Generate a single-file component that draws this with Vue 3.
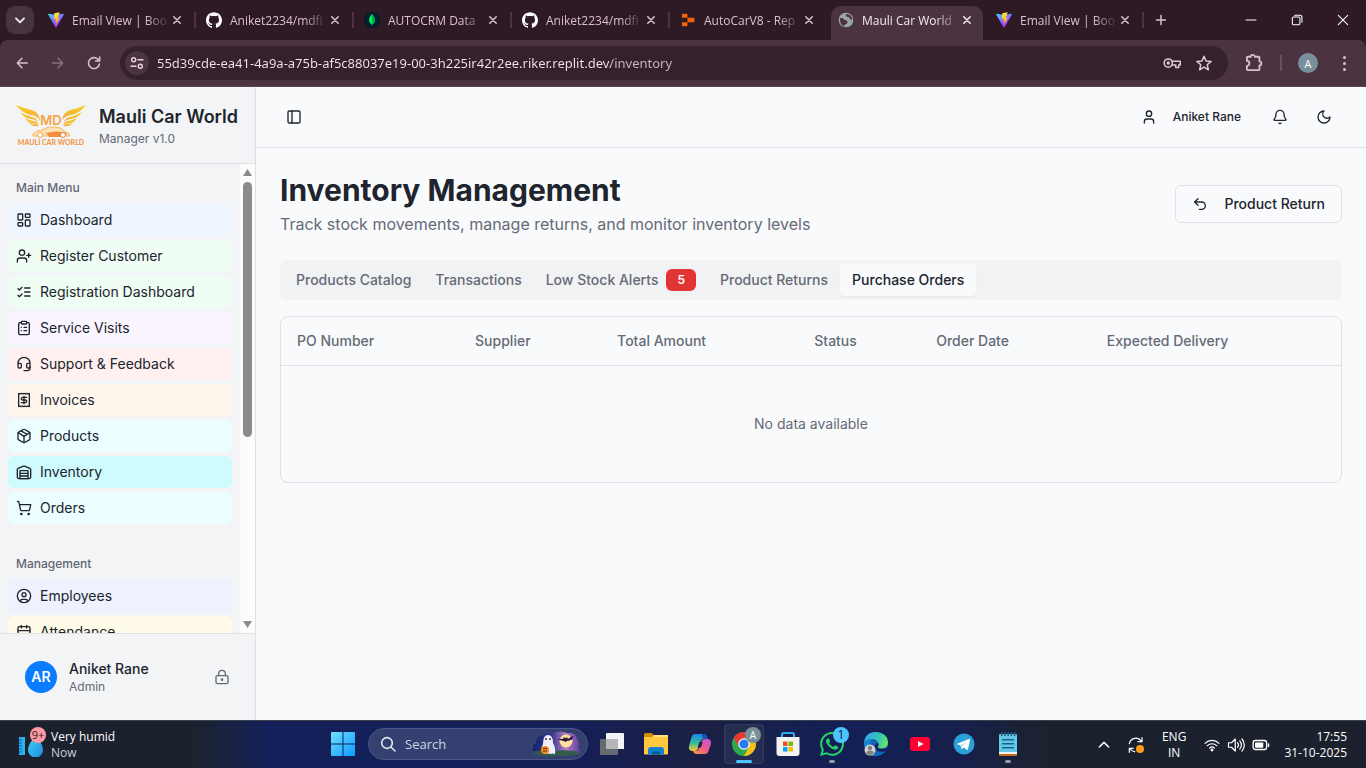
<script setup>
import { h, ref } from 'vue'

const line = {
  dashboard: '<rect width="7" height="9" x="3" y="3" rx="1"/><rect width="7" height="5" x="14" y="3" rx="1"/><rect width="7" height="9" x="14" y="12" rx="1"/><rect width="7" height="5" x="3" y="16" rx="1"/>',
  userPlus: '<path d="M16 21v-2a4 4 0 0 0-4-4H6a4 4 0 0 0-4 4v2M19 8v6M22 11h-6"/><circle cx="9" cy="7" r="4"/>',
  listChecks: '<path d="m3 17 2 2 4-4M3 7l2 2 4-4M13 6h8M13 12h8M13 18h8"/>',
  clipboard: '<rect width="8" height="4" x="8" y="2" rx="1"/><path d="M16 4h2a2 2 0 0 1 2 2v14a2 2 0 0 1-2 2H6a2 2 0 0 1-2-2V6a2 2 0 0 1 2-2h2M12 11h4M12 16h4M8 11h.01M8 16h.01"/>',
  headset: '<path d="M3 11h3a2 2 0 0 1 2 2v3a2 2 0 0 1-2 2H5a2 2 0 0 1-2-2v-5Zm0 0a9 9 0 1 1 18 0m0 0v5a2 2 0 0 1-2 2h-1a2 2 0 0 1-2-2v-3a2 2 0 0 1 2-2h3Z"/><path d="M21 16v2a4 4 0 0 1-4 4h-5"/>',
  receipt: '<path d="M4 2v20l2-1 2 1 2-1 2 1 2-1 2 1 2-1 2 1V2l-2 1-2-1-2 1-2-1-2 1-2-1-2 1Z"/><path d="M16 8h-6a2 2 0 1 0 0 4h4a2 2 0 1 1 0 4H8M12 17.5v-11"/>',
  package: '<path d="M11 21.73a2 2 0 0 0 2 0l7-4A2 2 0 0 0 21 16V8a2 2 0 0 0-1-1.73l-7-4a2 2 0 0 0-2 0l-7 4A2 2 0 0 0 3 8v8a2 2 0 0 0 1 1.73zM12 22V12"/><path d="m3.3 7 7.703 4.734a2 2 0 0 0 1.994 0L20.7 7M7.5 4.27l9 5.15"/>',
  warehouse: '<path d="M22 8.35V20a2 2 0 0 1-2 2H4a2 2 0 0 1-2-2V8.35A2 2 0 0 1 3.26 6.5l8-3.2a2 2 0 0 1 1.48 0l8 3.2A2 2 0 0 1 22 8.35ZM6 18h12M6 14h12"/><rect width="12" height="12" x="6" y="10"/>',
  cart: '<circle cx="8" cy="21" r="1"/><circle cx="19" cy="21" r="1"/><path d="M2.05 2.05h2l2.66 12.42a2 2 0 0 0 2 1.58h9.78a2 2 0 0 0 1.95-1.57l1.65-7.43H5.12"/>',
  userCircle: '<circle cx="12" cy="12" r="10"/><circle cx="12" cy="10" r="3"/><path d="M7 20.662V19a2 2 0 0 1 2-2h6a2 2 0 0 1 2 2v1.662"/>',
  calendar: '<path d="M8 2v4M16 2v4M3 10h18"/><rect width="18" height="18" x="3" y="4" rx="2"/>',
  lock: '<circle cx="12" cy="16" r="1"/><rect width="18" height="12" x="3" y="10" rx="2"/><path d="M7 10V7a5 5 0 0 1 10 0v3"/>',
  panel: '<rect width="18" height="18" x="3" y="3" rx="2"/><path d="M9 3v18"/>',
  user: '<path d="M19 21v-2a4 4 0 0 0-4-4H9a4 4 0 0 0-4 4v2"/><circle cx="12" cy="7" r="4"/>',
  bell: '<path d="M10.268 21a2 2 0 0 0 3.464 0M3.262 15.326A1 1 0 0 0 4 17h16a1 1 0 0 0 .74-1.673C19.41 13.956 18 12.499 18 8A6 6 0 0 0 6 8c0 4.499-1.411 5.956-2.738 7.326"/>',
  moon: '<path d="M12 3a6 6 0 0 0 9 9 9 9 0 1 1-9-9Z"/>',
  undo: '<path d="M9 14 4 9l5-5"/><path d="M4 9h10.5a5.5 5.5 0 0 1 0 11H11"/>',
  close: '<path d="M6.500 6.500 17.500 17.500M17.500 6.500 6.500 17.500"/>',
  plus: '<path d="M12 3v18M3 12h18"/>',
  chevronDown: '<path d="m6 9.500 6 6 6-6"/>',
  chevronUp: '<path d="m4 15.500 8-8 8 8"/>',
  back: '<path d="M21 12H4M12 4l-8 8 8 8"/>',
  forward: '<path d="M3 12h17M12 4l8 8-8 8"/>',
  reload: '<path d="M20 13.500A8.200 8.200 0 1 1 17.600 6.200L20 8.500M20.500 3v6h-6"/>',
  tune: '<circle cx="7" cy="7" r="3"/><path d="M13.500 7H21M3 17h7.500"/><circle cx="17" cy="17" r="3"/>',
  star: '<path d="m12 3 2.700 6.300 6.800.6-5.200 4.500 1.600 6.700L12 17.500l-5.900 3.600 1.600-6.700L2.500 9.900l6.800-.6z"/>',
  key: '<circle cx="7" cy="12" r="5.500"/><path d="M12 9.500h11v5h-2v3.500h-4v-3.500h-5"/><circle cx="7" cy="12" r="1.200"/>',
  puzzle: '<path d="M4.500 4.500H8a2.500 2.300 0 0 1 5 0h4.500a1 1 0 0 1 1 1V10a2.300 2.500 0 0 1 0 5v4.500a1 1 0 0 1-1 1h-13a1 1 0 0 1-1-1V15.500a3 3 0 0 0 0-6v-4a1 1 0 0 1 1-1z"/>',
  minimize: '<path d="M2 12h20"/>',
  restore: '<rect x="4" y="7" width="13" height="13" rx="2"/><path d="M8 4h9a3.500 3.500 0 0 1 3.500 3.500V16"/>',
  quit: '<path d="m4 4 16 16M20 4 4 20"/>',
  search: '<circle cx="10.500" cy="10.500" r="8"/><path d="m16.500 16.500 6 6"/>',
  volume: '<path d="M2 9v6h4l5 5V4L6 9zM14 9a4 4 0 0 1 0 6M17 6.500a8 8 0 0 1 0 11M20 4a12 12 0 0 1 0 16"/>',
  wifi: '<path d="M1.500 9.500a15 15 0 0 1 21 0M5 13a10 10 0 0 1 14 0M8.500 16.500a5 5 0 0 1 7 0"/><circle cx="12" cy="19.500" r="1.300" fill="currentColor"/>',
  sync: '<path d="M2 10a10 10 0 0 1 18-4M21 1v6h-6M2 23v-6h6M3 18a10 10 0 0 0 7 4"/>'
}

const art = {
  vite: '<defs><linearGradient id="va" x1="0" y1="0" x2=".6" y2="1"><stop offset="0" stop-color="#41d1ff"/><stop offset=".9" stop-color="#b42cfe"/></linearGradient><linearGradient id="vb" x1=".4" y1="0" x2=".6" y2="1"><stop offset="0" stop-color="#ffe94a"/><stop offset="1" stop-color="#ffa000"/></linearGradient></defs><path fill="url(#va)" d="M23.600 4 12.700 23q-.7 1-1.400 0L.4 4Q0 2.600 1.400 2.800L12 4.500l10.600-1.700q1.400-.2 1 1.200z"/><path fill="url(#vb)" d="m17.500.4-8 1.600-.7 8.700 3.200-.7-1 4.600 2.100-.6-1.200 5.700 5.700-11-3 .6z"/>',
  github: '<path fill="#fff" d="M12 .297c-6.630 0-12 5.373-12 12 0 5.303 3.438 9.800 8.205 11.385.6.113.82-.258.82-.577 0-.285-.01-1.040-.015-2.040-3.338.724-4.042-1.610-4.042-1.610C4.422 18.070 3.633 17.700 3.633 17.700c-1.087-.744.084-.729.084-.729 1.205.084 1.838 1.236 1.838 1.236 1.070 1.835 2.809 1.305 3.495.998.108-.776.417-1.305.76-1.605-2.665-.3-5.466-1.332-5.466-5.930 0-1.310.465-2.380 1.235-3.220-.135-.303-.54-1.523.105-3.176 0 0 1.005-.322 3.300 1.230.96-.267 1.980-.399 3-.405 1.020.006 2.040.138 3 .405 2.280-1.552 3.285-1.230 3.285-1.230.645 1.653.24 2.873.12 3.176.765.84 1.230 1.910 1.230 3.220 0 4.610-2.805 5.625-5.475 5.920.42.36.81 1.096.81 2.220 0 1.606-.015 2.896-.015 3.286 0 .315.21.69.825.57C20.565 22.092 24 17.592 24 12.297c0-6.627-5.373-12-12-12"/>',
  mongo: '<circle cx="12" cy="12" r="12" fill="#001e2b"/><path fill="#00ed64" d="M12 3c1 2 4.500 4.500 4.500 9 0 4-2.500 5.500-4 6.800V21h-.8v-2.200C10.200 17.500 7.500 16 7.500 12c0-4.500 3.500-7 4.500-9z"/><path fill="#00a64a" d="M12 3c1 2 4.500 4.500 4.500 9 0 4-2.500 5.500-4.300 6.800z"/>',
  replit: '<path fill="#f26207" d="M4 2.500h6A1.200 1.200 0 0 1 11.200 3.700V8.800H4A1.200 1.200 0 0 1 2.800 7.600V3.700A1.200 1.200 0 0 1 4 2.500zM11.200 8.800h9.300A1.200 1.200 0 0 1 21.700 10v4a1.200 1.200 0 0 1-1.200 1.200h-9.300zM4 15.200h7.200v5.100A1.200 1.200 0 0 1 10 21.500H4A1.200 1.200 0 0 1 2.800 20.300v-3.900A1.200 1.200 0 0 1 4 15.200z"/>',
  globe: '<circle cx="12" cy="12" r="11" fill="#9aa4aa"/><path fill="#4b343f" d="M3 9q4-.3 6 1.500 1 2 3 2 3 .5 2 3.500-.5 2.500-3 2.500-1.800 0-1.500 3Q3 19.500 3 12zM12 3q-1 3.500 2 4.500 3-.5 3.500 2 .5 2.500 4 2Q21 5.500 15 3.500z"/>',
  windows: '<defs><linearGradient id="wa" x1="0" y1="0" x2="1" y2="1"><stop offset="0" stop-color="#6fe0ff"/><stop offset="1" stop-color="#0c9bff"/></linearGradient></defs><path fill="url(#wa)" d="M1 0h10.500v11.500H0V1q0-1 1-1zM12.500 0H23q1 0 1 1v10.500H12.500zM0 12.500h11.500V24H1q-1 0-1-1zM12.500 12.500H24V23q0 1-1 1H12.500z"/>',
  taskview: '<path fill="#f2f3f5" d="M7 1h16a1 1 0 0 1 1 1v15H6V2a1 1 0 0 1 1-1z" /><rect x="0" y="7" width="18" height="16" rx="1" fill="#666a70"/><path fill="#b4b6ba" d="M6 7h12v10H6z"/>',
  folder: '<path fill="#d08b00" d="M0 2.500Q0 1 1.500 1H8l2 2.500h5V9H0z"/><path fill="#ffc83d" d="M0 5h8l2-2h14v18.500q0 1-1 1H1q-1 0-1-1z"/><path fill="#ffe083" d="M10 3h14v2H8.500z"/><path fill="#1381d1" d="M4 22.500V18q0-3 3-3h10q3 0 3 3v4.500z"/><path fill="#075a9c" d="M8 22.500V21q0-1.500 1.500-1.500h5q1.500 0 1.500 1.500v1.500z"/>',
  copilot: '<defs><linearGradient id="ca" x1="0" y1="0" x2="0" y2="1"><stop offset="0" stop-color="#1a86ec"/><stop offset=".5" stop-color="#31b8a0"/><stop offset="1" stop-color="#f8c931"/></linearGradient><linearGradient id="cb" x1="1" y1="0" x2="0" y2="1"><stop offset="0" stop-color="#b650e8"/><stop offset=".5" stop-color="#f15a86"/><stop offset="1" stop-color="#fb9a45"/></linearGradient></defs><path fill="url(#ca)" d="M7 2h9q2 0 3 3l.5 2h-4q-2.500 0-3.200 2.500L10 16.500Q9.300 19 6.500 19H3.500Q0 18 1.200 13.500L3.500 5Q4.500 2 7 2z"/><path fill="url(#cb)" d="M17 22H8.500q-2.500 0-3.500-3h2.500q2.700 0 3.500-2.500l2.500-7Q14.300 7 17 7h3.500q3.500 1 2.300 5.500L20.500 19q-1 3-3.500 3z"/><path fill="#1750c4" d="M14 2h2q2 0 3 3l.5 2h-3q-2 0-2.500-2z"/><path fill="#14205a" d="M11.500 10h3.200l-1.800 5.500h-3.200z"/>',
  chrome: '<circle cx="12" cy="12" r="12" fill="#2da94f"/><path fill="#fbc116" d="M12 6.500h10.600A12 12 0 0 1 12 24l5-9z"/><path fill="#e33b2e" d="M1.600 6A12 12 0 0 1 22.600 6.500H12L7 15z"/><circle cx="12" cy="12" r="5.800" fill="#fff"/><circle cx="12" cy="12" r="4.600" fill="#267af4"/>',
  store: '<path d="M6 6V2.500Q6 1 7.500 1h9Q18 1 18 2.500V6" fill="none" stroke="#28aeea" stroke-width="2"/><path fill="#f3f3f3" d="M1 5h22q.5 0 .5.500V21q0 3-3 3h-17q-3 0-3-3V5.500Q.5 5 1 5z"/><path fill="#f04e24" d="M7 9.500h4.500V14H7z"/><path fill="#7fba00" d="M12.500 9.500H17V14h-4.500z"/><path fill="#00a4ef" d="M7 15h4.500v4.500H7z"/><path fill="#ffb900" d="M12.500 15H17v4.500h-4.500z"/>',
  whatsapp: '<path fill="#25d366" d="M17.472 14.382c-.297-.149-1.758-.867-2.030-.967-.273-.099-.471-.148-.67.15-.197.297-.767.966-.94 1.164-.173.199-.347.223-.644.075-.297-.15-1.255-.463-2.390-1.475-.883-.788-1.480-1.761-1.653-2.059-.173-.297-.018-.458.13-.606.134-.133.298-.347.446-.52.149-.174.198-.298.298-.497.099-.198.05-.371-.025-.52-.075-.149-.669-1.612-.916-2.207-.242-.579-.487-.5-.669-.51-.173-.008-.371-.01-.57-.01-.198 0-.52.074-.792.372-.272.297-1.040 1.016-1.040 2.479 0 1.462 1.065 2.875 1.213 3.074.149.198 2.096 3.200 5.077 4.487.709.306 1.262.489 1.694.625.712.227 1.360.195 1.871.118.571-.085 1.758-.719 2.006-1.413.248-.694.248-1.289.173-1.413-.074-.124-.272-.198-.57-.347m-5.421 7.403h-.004a9.870 9.870 0 0 1-5.031-1.378l-.361-.214-3.741.982.998-3.648-.235-.374a9.860 9.860 0 0 1-1.510-5.260c.001-5.450 4.436-9.884 9.888-9.884 2.640 0 5.122 1.030 6.988 2.898a9.825 9.825 0 0 1 2.893 6.994c-.003 5.450-4.437 9.884-9.885 9.884m8.413-18.297A11.815 11.815 0 0 0 12.050 0C5.495 0 .16 5.335.157 11.892c0 2.096.547 4.142 1.588 5.945L.057 24l6.305-1.654a11.882 11.882 0 0 0 5.683 1.448h.005c6.554 0 11.890-5.335 11.893-11.893a11.821 11.821 0 0 0-3.480-8.413Z"/>',
  edge: '<defs><linearGradient id="ea" x1="0" y1=".3" x2="1" y2=".6"><stop offset="0" stop-color="#2ba7ea"/><stop offset=".6" stop-color="#37c6b4"/><stop offset="1" stop-color="#6be85a"/></linearGradient></defs><circle cx="12" cy="12" r="12" fill="#0f66b8"/><path fill="url(#ea)" d="M0 11Q1 0 12 0q11.500 1 12 10 0 6-6.500 6.500-4 0-4-2 1-1 .8-3Q13.500 7 8 7 2 7 0 11z"/><path fill="#1b86d9" d="M0 11Q3 7 8 7.500 5 10 5.500 14.500 6.500 22 13 24 1 24 0 11z"/><path fill="#14235a" d="M14.300 11q1 2-.6 3.800.2 2 4 2 4.500-.2 6.800-1.600-1 2.600-3 4.300-9.500 1.500-11-4.500 0-3.500 3.800-4z"/><circle cx="6" cy="18" r="5.500" fill="#d3d3d3"/><circle cx="6" cy="16" r="2.200" fill="#808080"/><path fill="#808080" d="M2 21q.5-2.500 4-2.500t4 2.500q-4 4-8 0z"/>',
  youtube: '<rect x="2" y="5" width="20" height="14" rx="3" fill="#ff0033"/><path fill="#fff" d="m10 9 5.500 3-5.500 3z"/>',
  telegram: '<circle cx="12" cy="12" r="10.500" fill="#2b9fda"/><path fill="#fff" d="m5 11.800 12-4.800q1.200-.3 1 .9l-2 9.300q-.3 1.200-1.400.6l-3-2.200-1.600 1.500q-.6.500-.8-.5l-.8-3.400-3.300-1q-.9-.3-.1-.4z"/><path fill="#b5d8ee" d="m8.500 13.200 7-4.400-5.400 5.300-.5 3z"/>',
  notepad: '<path fill="#c46a1c" d="M3 20h18v3q0 1-1 1H4q-1 0-1-1z"/><path fill="#f3f3f3" d="M3 19h18v3H3z"/><path fill="#5fc8e6" d="M4 2h16q1 0 1 1v17H3V3q0-1 1-1z"/><path fill="#1f5f85" d="M5 0h1.500v4H5zM8.200 0h1.500v4H8.200zM11.400 0h1.500v4h-1.500zM14.600 0h1.500v4h-1.500zM17.800 0h1.500v4h-1.500zM6 7h12v1.500H6zM6 11h12v1.500H6zM6 15h12v1.500H6z"/>',
  humidity: '<defs><linearGradient id="ha" x1="0" y1="0" x2="1" y2="1"><stop offset="0" stop-color="#45cdf5"/><stop offset="1" stop-color="#1c8fe0"/></linearGradient></defs><rect x="0" y="4" width="6" height="18" fill="#2cb1ec"/><path stroke="#0b5fa5" d="M0 7h3M0 10h3M0 13h3M0 16h3M0 19h3"/><path fill="url(#ha)" d="M16.500 3q7.500 8 7.500 14a7.500 7.500 0 0 1-15 0q0-6 7.500-14z"/>',
  battery: '<rect x="1.500" y="6" width="18" height="12" rx="3" fill="none" stroke="#fff" stroke-width="1.800"/><rect x="4" y="8.500" width="11" height="7" rx="1" fill="#fff"/><path stroke="#fff" stroke-width="2" stroke-linecap="round" d="M22 10.500v3"/>'
}

const Icon = (props) =>
  h('svg', { viewBox: '0 0 24 24', fill: 'none', stroke: 'currentColor', 'stroke-width': props.weight || 2, 'stroke-linecap': 'round', 'stroke-linejoin': 'round', 'aria-hidden': 'true', innerHTML: line[props.name] })
Icon.props = ['name', 'weight']

const Art = (props) => h('svg', { viewBox: '0 0 24 24', 'aria-hidden': 'true', innerHTML: art[props.name] })
Art.props = ['name']

const tabs = [
  { icon: 'vite', title: 'Email View | Boo' },
  { icon: 'github', title: 'Aniket2234/mdfi' },
  { icon: 'mongo', title: 'AUTOCRM Data' },
  { icon: 'github', title: 'Aniket2234/mdfi' },
  { icon: 'replit', title: 'AutoCarV8 - Rep' },
  { icon: 'globe', title: 'Mauli Car World', active: true },
  { icon: 'vite', title: 'Email View | Boo' }
]
const url = ref('55d39cde-ea41-4a9a-a75b-af5c88037e19-00-3h225ir42r2ee.riker.replit.dev/inventory')
const query = ref('')

const groups = [
  {
    label: 'Main Menu',
    items: [
      { icon: 'dashboard', label: 'Dashboard', tone: 'blue' },
      { icon: 'userPlus', label: 'Register Customer', tone: 'green' },
      { icon: 'listChecks', label: 'Registration Dashboard', tone: 'green' },
      { icon: 'clipboard', label: 'Service Visits', tone: 'purple' },
      { icon: 'headset', label: 'Support & Feedback', tone: 'red' },
      { icon: 'receipt', label: 'Invoices', tone: 'orange' },
      { icon: 'package', label: 'Products', tone: 'cyan' },
      { icon: 'warehouse', label: 'Inventory', tone: 'current' },
      { icon: 'cart', label: 'Orders', tone: 'cyan' }
    ]
  },
  {
    label: 'Management',
    items: [
      { icon: 'userCircle', label: 'Employees', tone: 'indigo' },
      { icon: 'calendar', label: 'Attendance', tone: 'yellow' }
    ]
  }
]

const sections = [
  { label: 'Products Catalog' },
  { label: 'Transactions' },
  { label: 'Low Stock Alerts', count: 5 },
  { label: 'Product Returns' },
  { label: 'Purchase Orders' }
]
const section = ref('Purchase Orders')
const columns = ['PO Number', 'Supplier', 'Total Amount', 'Status', 'Order Date', 'Expected Delivery']

const apps = [
  { name: 'taskview', label: 'Task View' },
  { name: 'folder', label: 'File Explorer' },
  { name: 'copilot', label: 'Copilot' },
  { name: 'chrome', label: 'Chrome', badge: 'A', state: 'focused' },
  { name: 'store', label: 'Store' },
  { name: 'whatsapp', label: 'WhatsApp', badge: '1', state: 'running' },
  { name: 'edge', label: 'Edge' },
  { name: 'youtube', label: 'YouTube' },
  { name: 'telegram', label: 'Telegram' },
  { name: 'notepad', label: 'Notepad', state: 'running' }
]
</script>

<template>
  <div class="screen">
    <header class="browser">
      <div class="tabstrip">
        <button class="tab-search" aria-label="Search tabs"><Icon name="chevronDown" weight="3" class="i16" /></button>
        <div v-for="(tab, i) in tabs" :key="i" class="tab" :class="{ active: tab.active, plain: i === 4 }">
          <Art :name="tab.icon" class="i16" />
          <span class="tab-title">{{ tab.title }}</span>
          <button class="tab-close" aria-label="Close tab"><Icon name="close" weight="2.600" class="i16" /></button>
        </div>
        <button class="new-tab" aria-label="New tab"><Icon name="plus" class="i12" weight="3" /></button>
        <div class="window-buttons">
          <button aria-label="Minimize"><Icon name="minimize" class="i12" weight="2" /></button>
          <button aria-label="Restore"><Icon name="restore" class="i14" weight="1.800" /></button>
          <button aria-label="Close"><Icon name="quit" class="i14" weight="1.800" /></button>
        </div>
      </div>
      <div class="toolbar">
        <button class="tool" aria-label="Back"><Icon name="back" class="i14" weight="2.600" /></button>
        <button class="tool dim" aria-label="Forward"><Icon name="forward" class="i14" weight="2.600" /></button>
        <button class="tool" aria-label="Reload"><Icon name="reload" class="i16" weight="2.400" /></button>
        <div class="omnibox">
          <button class="site-info" aria-label="Site information"><Icon name="tune" class="i16" weight="2.200" /></button>
          <input v-model="url" class="url" aria-label="Address" spellcheck="false" />
          <button class="tool" aria-label="Passwords"><Icon name="key" class="i18" /></button>
          <button class="tool" aria-label="Bookmark"><Icon name="star" class="i18" /></button>
        </div>
        <div class="toolbar-end">
          <button aria-label="Extensions"><Icon name="puzzle" class="i20" weight="2.200" /></button>
          <span class="divider"></span>
          <button class="profile" aria-label="Profile">A</button>
          <button class="kebab" aria-label="Menu"><i></i><i></i><i></i></button>
        </div>
      </div>
    </header>

    <div class="app">
      <aside class="sidebar">
        <div class="brand">
          <svg class="logo" viewBox="0 0 72 44" role="img" aria-label="Mauli Car World logo">
            <defs>
              <linearGradient id="wing" x1="0" y1="0" x2="0" y2="1">
                <stop offset="0" stop-color="#f8d21c" />
                <stop offset="1" stop-color="#f4a54a" />
              </linearGradient>
            </defs>
            <g id="half" fill="url(#wing)">
              <path d="M1 2q10 4 16 5 7 2 8 11-2-5-9-6Q7 10 1 2z" />
              <path d="M5 9q7 4 12 5 5 1 6 5-3-3-7-3Q9 15 5 9z" />
              <path d="M10 15q4 2 8 3 4 0 6 4-3-2-7-2-4 0-7-5z" />
              <path d="M14 20q4 1 7 1l3 2q-6 1-10-3z" />
            </g>
            <use href="#half" transform="matrix(-1 0 0 1 72 0)" />
            <text x="36" y="22" class="logo-md">MD</text>
            <path d="M18 31q3-4 9-4 6-4 13-3 6 0 9 4 5 1 6 5H18z" fill="#fbe3b4" stroke="#f3b85c" stroke-width="1" />
            <path d="M30 30q12-3 22 0l-2 4H34q-1-3-4-4z" fill="#f58d3c" />
            <circle cx="25" cy="32" r="2.500" fill="#fff" stroke="#f3a23c" />
            <circle cx="48" cy="32" r="2.500" fill="#fff" stroke="#ee7950" />
            <text x="36" y="42" class="logo-name">MAULI CAR WORLD</text>
          </svg>
          <div>
            <div class="brand-name">Mauli Car World</div>
            <div class="brand-sub">Manager v1.0</div>
          </div>
        </div>

        <div class="nav-area">
          <nav class="nav">
            <section v-for="group in groups" :key="group.label" class="group">
              <h2 class="group-label">{{ group.label }}</h2>
              <a v-for="item in group.items" :key="item.label" href="#" class="nav-item" :class="item.tone">
                <Icon :name="item.icon" class="i16" /><span>{{ item.label }}</span>
              </a>
            </section>
          </nav>
          <div class="scrollbar" aria-hidden="true">
            <span class="arrow up"></span>
            <div class="track"><span class="thumb"></span></div>
            <span class="arrow down"></span>
          </div>
        </div>

        <div class="account">
          <span class="avatar">AR</span>
          <div class="account-text">
            <div class="account-name">Aniket Rane</div>
            <div class="account-role">Admin</div>
          </div>
          <button class="lock" aria-label="Lock"><Icon name="lock" class="i16" /></button>
        </div>
      </aside>

      <div class="content">
        <header class="topbar">
          <button class="square" aria-label="Toggle sidebar"><Icon name="panel" class="i16" /></button>
          <button class="user"><Icon name="user" class="i16" /><span>Aniket Rane</span></button>
          <button class="square" aria-label="Notifications"><Icon name="bell" class="i16" /></button>
          <button class="square" aria-label="Toggle theme"><Icon name="moon" class="i16" /></button>
        </header>
        <main class="page">
          <div class="page-head">
            <div>
              <h1>Inventory Management</h1>
              <p>Track stock movements, manage returns, and monitor inventory levels</p>
            </div>
            <button class="return"><Icon name="undo" class="i16" />Product Return</button>
          </div>
          <div class="sections" role="tablist">
            <button v-for="s in sections" :key="s.label" role="tab" :aria-selected="section === s.label" :class="{ selected: section === s.label }" @click="section = s.label">
              {{ s.label }}<span v-if="s.count" class="count">{{ s.count }}</span>
            </button>
          </div>
          <div class="card">
            <table>
              <colgroup>
                <col class="c1" /><col class="c2" /><col class="c3" /><col class="c4" /><col class="c5" /><col />
              </colgroup>
              <thead>
                <tr><th v-for="c in columns" :key="c" scope="col">{{ c }}</th></tr>
              </thead>
              <tbody>
                <tr><td :colspan="columns.length">No data available</td></tr>
              </tbody>
            </table>
          </div>
        </main>
      </div>
    </div>

    <footer class="taskbar">
      <button class="weather">
        <span class="weather-icon"><Art name="humidity" class="i24" /><span class="weather-badge">9+</span></span>
        <span class="weather-text"><span>Very humid</span><span class="soft">Now</span></span>
      </button>
      <div class="dock">
        <button class="dock-app" aria-label="Start"><Art name="windows" class="i24" /></button>
        <label class="search">
          <Icon name="search" class="i16" weight="2.400" />
          <input v-model="query" placeholder="Search" aria-label="Search" />
          <svg class="spooky" viewBox="0 0 50 26" aria-hidden="true">
            <defs>
              <linearGradient id="night" x1="0" x2="1">
                <stop offset="0" stop-color="#10256e" />
                <stop offset=".4" stop-color="#37378c" />
                <stop offset=".7" stop-color="#b77fc6" />
                <stop offset="1" stop-color="#5b3c9c" />
              </linearGradient>
            </defs>
            <path d="M1 20Q0 14 4 12q0-8 8-8 3-4 9-2 8-3 14 0 9-1 10 6 4 4 1 8 3 3 2 7z" fill="url(#night)" />
            <path d="M1 21q9-3 20-1 14-2 28 1-3 4-23 4Q4 26 1 21z" fill="#345c4a" />
            <circle cx="34" cy="10" r="6.500" fill="#ffe39a" />
            <path d="M26 9q2-2 5-1l1-2 1 1h1l1-1 1 2q3-3 6-3-2 2-2 4-2-1-3 1-2-1-3 1-2-1-3-1-2-1-5-1z" fill="#2c1645" />
            <path d="M11 22q-3-3 0-9 0-9 5-9t5 8q3 5 2 11-3-1-4 0-3-1-5 0z" fill="#f2edfa" />
            <circle cx="14" cy="8" r="1" fill="#333" /><circle cx="18" cy="8" r="1" fill="#333" />
            <circle cx="13" cy="19" r="4" fill="#f18b22" /><path d="m11 18 1-1 1 1 1-1 1 1M11 20h4" stroke="#652f08" fill="none" />
          </svg>
        </label>
        <button v-for="app in apps" :key="app.name" class="dock-app" :class="[app.state, app.name]" :aria-label="app.label">
          <Art :name="app.name" class="i24" />
          <span v-if="app.badge" class="badge">{{ app.badge }}</span>
        </button>
      </div>
      <div class="tray">
        <button aria-label="Hidden icons"><Icon name="chevronUp" class="i14" weight="2.600" /></button>
        <button class="sync" aria-label="Updates"><Icon name="sync" class="i16" weight="1.800" /><i></i></button>
        <button class="lang"><span>ENG</span><span>IN</span></button>
        <button class="status" aria-label="Network, volume and battery">
          <Icon name="wifi" class="i16" weight="1.800" /><Icon name="volume" class="i18" weight="1.600" /><Art name="battery" class="i18" />
        </button>
        <button class="clock"><span>17:55</span><span>31-10-2025</span></button>
      </div>
    </footer>
  </div>
</template>

<style>
body { margin: 0; }
</style>

<style scoped>
* { box-sizing: border-box; }
button, input { font: inherit; color: inherit; border: 0; padding: 0; margin: 0; background: none; }
button { display: flex; align-items: center; justify-content: center; }
svg { display: block; flex: none; }
.i12 { width: 12px; height: 12px; }
.i14 { width: 14px; height: 14px; }
.i16 { width: 16px; height: 16px; }
.i18 { width: 18px; height: 18px; }
.i20 { width: 20px; height: 20px; }
.i24 { width: 24px; height: 24px; }

.screen { height: 100vh; min-height: 480px; display: flex; flex-direction: column; overflow: hidden; font-family: Inter, "Liberation Sans", sans-serif; color: #20242d; }

.browser { flex: none; font-family: "Open Sans", "Noto Sans", sans-serif; background: #2d1a25; color: #dcbfcd; }
.tabstrip { display: flex; height: 40px; align-items: center; padding-left: 6px; }
.tab-search { width: 28px; height: 28px; margin-right: 4px; border-radius: 9px; background: #463440; color: #f4e5ec; }
.tab { position: relative; display: flex; align-items: center; flex: 0 1 158px; min-width: 0; height: 34px; margin-top: 6px; padding: 0 11px 6px 10px; font-size: 12px; }
.tab::after { content: ""; position: absolute; right: 0; top: 6px; width: 2px; height: 16px; background: #4b343f; }
.tab.plain::after, .tab.active::after { display: none; }
.tab.active { color: #f5e8ee; z-index: 1; }
.tab.active::before { content: ""; position: absolute; inset: 0 3px; z-index: -1; border-radius: 10px 10px 0 0; background: #4b343f; }
.tab-title { flex: 1; min-width: 0; margin: 0 2px 0 8px; overflow: hidden; white-space: nowrap; mask-image: linear-gradient(to right, #000 78%, #0003 98%); }
.tab-close { width: 16px; height: 16px; }
.tab-close svg { width: 14px; height: 14px; }
.new-tab { width: 28px; height: 28px; margin-left: 3px; }
.window-buttons { display: flex; margin-left: auto; color: #fff; }
.window-buttons button { width: 46px; height: 40px; }
.toolbar { display: flex; align-items: center; height: 47px; padding-left: 8px; background: #4b343f; border-radius: 8px 8px 0 0; border-bottom: 1px solid #5a4651; }
.tool { width: 28px; height: 28px; margin-right: 8px; }
.tool.dim { color: #8b7080; }
.omnibox { display: flex; flex: 1; align-items: center; height: 34px; margin-left: 4px; padding: 0 4px 0 5px; border-radius: 17px; background: #34212c; }
.omnibox .tool { width: 24px; color: #dccbd4; }
.site-info { width: 24px; height: 24px; border-radius: 12px; background: #4b343f; color: #e7d6de; }
.url { flex: 1; min-width: 0; margin-left: 8px; font-family: "Noto Sans", sans-serif; font-size: 13px; line-height: 20px; color: transparent; background: linear-gradient(to right, #f3e6ed 454px, #cbb9c3 454px); background-clip: text; }
.toolbar-end { display: flex; align-items: center; padding: 0 16px; gap: 16px; }
.divider { width: 2px; height: 16px; background: #6b4f5d; }
.profile { width: 20px; height: 20px; margin-right: 4px; border-radius: 10px; background: #78909c; color: #fff; font-size: 11px; }
.kebab { flex-direction: column; gap: 3px; width: 12px; }
.kebab i { width: 3px; height: 3px; border-radius: 2px; background: #dcbfcd; }

.app { flex: 1; min-height: 0; display: flex; background: #f9fafc; }
.sidebar { display: flex; flex-direction: column; flex: none; width: 256px; background: #f3f4f6; border-right: 1px solid #dee0e3; }
.brand { display: flex; align-items: center; gap: 12px; height: 77px; flex: none; padding: 0 15px; border-bottom: 1px solid #dfe1e4; }
.logo { width: 72px; height: 44px; }
.logo-md { font: 600 13px Inter, sans-serif; fill: #f5a443; text-anchor: middle; }
.logo-name { font: 900 7px Lato, sans-serif; fill: #f3994a; text-anchor: middle; }
.brand-name { font-size: 18px; line-height: 28px; font-weight: 600; white-space: nowrap; }
.brand-sub { font-size: 12px; line-height: 16px; color: #656a76; }
.nav-area { flex: 1; min-height: 0; display: flex; }
.nav { flex: 1; overflow: auto; scrollbar-width: none; }
.group { display: flex; flex-direction: column; gap: 4px; padding: 8px; margin-bottom: 8px; }
.group-label { margin: 0 0 -4px; padding: 0 8px; font-size: 12px; line-height: 32px; font-weight: 500; color: #616671; }
.nav-item { display: flex; align-items: center; flex: none; gap: 8px; height: 32px; padding: 0 8px; border-radius: 6px; font-size: 14px; line-height: 20px; color: #20242d; text-decoration: none; }
.blue { background: #eff6ff; }
.green { background: #f0fdf4; }
.purple { background: #faf5ff; }
.red { background: #fff0f0; }
.orange { background: #fff7ed; }
.cyan { background: #ecfeff; }
.current { background: #cffafe; }
.indigo { background: #eef2ff; }
.yellow { background: #fffbe8; }
.scrollbar { display: flex; flex-direction: column; align-items: center; width: 15px; background: #fcfcfc; padding: 5px 0; }
.arrow { width: 9px; height: 7px; background: #8b8b8b; }
.up { clip-path: polygon(50% 0, 100% 100%, 0 100%); }
.down { clip-path: polygon(0 0, 100% 0, 50% 100%); }
.track { flex: 1; width: 9px; padding: 6px 0; }
.thumb { display: block; height: 59%; border-radius: 5px; background: #8b8b8b; }
.account { display: flex; align-items: center; flex: none; height: 87px; padding: 0 24px 0 25px; border-top: 1px solid #dfe1e4; }
.avatar { display: flex; align-items: center; justify-content: center; width: 32px; height: 32px; border-radius: 16px; background: #0a7cff; color: #fff; font-size: 14px; line-height: 20px; font-weight: 600; margin-right: 12px; }
.account-text { flex: 1; }
.account-name { font-size: 14px; line-height: 20px; font-weight: 500; }
.account-role { font-size: 12px; line-height: 16px; color: #656a76; }
.lock { width: 18px; height: 32px; color: #656a76; }

.content { flex: 1; min-width: 0; }
.topbar { display: flex; align-items: center; gap: 8px; height: 61px; padding: 0 24px 0 20px; border-bottom: 1px solid #dfe1e4; }
.square { width: 36px; height: 36px; }
.user { gap: 16px; margin-left: auto; padding: 0 13px 0 12px; font-size: 12px; line-height: 16px; font-weight: 500; }
.page { padding: 24px; }
.page-head { display: flex; justify-content: space-between; align-items: center; margin-bottom: 24px; }
h1 { margin: 0; font-size: 30px; line-height: 36px; font-weight: 700; }
p { margin: 4px 0 0; font-size: 16px; line-height: 24px; color: #656a76; }
.return { height: 38px; gap: 16px; padding: 0 16px; border: 1px solid #dee0e3; border-radius: 6px; font-size: 14px; line-height: 20px; font-weight: 500; }
.sections { display: flex; height: 40px; padding: 4px; margin-bottom: 16px; border-radius: 6px; background: #f1f2f3; color: #656a76; }
.sections button { gap: 8px; padding: 0 12px; border-radius: 4px; font-size: 14px; line-height: 20px; font-weight: 500; white-space: nowrap; }
.sections .selected { background: #f9fafc; color: #20242d; box-shadow: 0 1px 2px #0000000d; }
.count { padding: 0 11px; border-radius: 6px; font-size: 12px; line-height: 22px; font-weight: 600; color: #fff; background: #e13535; }
.card { border: 1px solid #dee0e3; border-radius: 8px; }
table { width: 100%; table-layout: fixed; border-collapse: collapse; font-size: 14px; line-height: 20px; color: #656a76; }
th { height: 48px; padding: 0 16px; text-align: left; font-weight: 500; border-bottom: 1px solid #dee0e3; }
td { height: 117px; padding: 0; text-align: center; }
.c1 { width: 16.8%; }
.c2 { width: 13.4%; }
.c3 { width: 18.6%; }
.c4 { width: 11.5%; }
.c5 { width: 16.1%; }

.taskbar { flex: none; display: flex; height: 48px; padding-right: 15px; font-family: "Open Sans", "Noto Sans", sans-serif; font-size: 12px; color: #fff; border-top: 1px solid #3c3f4c; background: linear-gradient(to right, #1c222d 0, #1c222d 14%, #13205a 20%, #141f57 42%, #1b1f43 51%, #132056 62%, #16204c 70%, #1c222d 77%); }
.weather { flex: 1 1 0; justify-content: flex-start; padding-left: 4px; text-align: left; }
.weather-icon { position: relative; margin: 0 8px 0 15px; }
.weather-badge { position: absolute; left: 11px; top: -6px; width: 16px; height: 16px; border-radius: 8px; background: #ff99a4; color: #241a1c; font-size: 11px; line-height: 16px; text-align: center; }
.weather-text, .lang, .clock { display: flex; flex-direction: column; line-height: 16px; }
.soft { color: #cdd0d6; }
.dock { flex: none; display: flex; align-items: center; gap: 4px; padding-bottom: 2px; }
.dock-app { position: relative; width: 40px; height: 40px; border-radius: 4px; }
.search { display: flex; align-items: center; width: 220px; height: 32px; margin-left: 1px; padding: 0 5px 0 11px; border: 1px solid #4d5785; border-radius: 16px; background: #34406f; color: #e7eaf3; }
.search input { flex: 1; min-width: 0; margin-left: 9px; font-size: 13px; }
.search input::placeholder { color: #cfd4e3; opacity: 1; }
.spooky { width: 50px; height: 26px; }
.focused { background: #252d51; box-shadow: inset 0 0 0 1px #323959; }
.dock-app.focused::after, .dock-app.running::after { content: ""; position: absolute; bottom: 1px; width: 6px; height: 3px; border-radius: 2px; background: #969aa8; }
.dock-app.focused::after { width: 16px; background: #4cc2ff; }
.badge { position: absolute; right: 3px; top: 3px; width: 16px; height: 16px; border-radius: 8px; background: #4cc2ff; color: #14202c; font-size: 12px; line-height: 16px; text-align: center; }
.chrome .badge { background: #78909c; color: #fff; font-size: 10px; }
.tray { flex: 1 1 0; display: flex; justify-content: flex-end; align-items: center; padding-right: 4px; }
.sync { position: relative; width: 16px; margin: 0 18px 0 17px; }
.sync i { position: absolute; right: 0; bottom: 0; width: 8px; height: 8px; border-radius: 4px; background: #ff9b17; }
.status { gap: 7px; margin: 0 14px 0 18px; }
.clock { align-items: flex-end; }
</style>
